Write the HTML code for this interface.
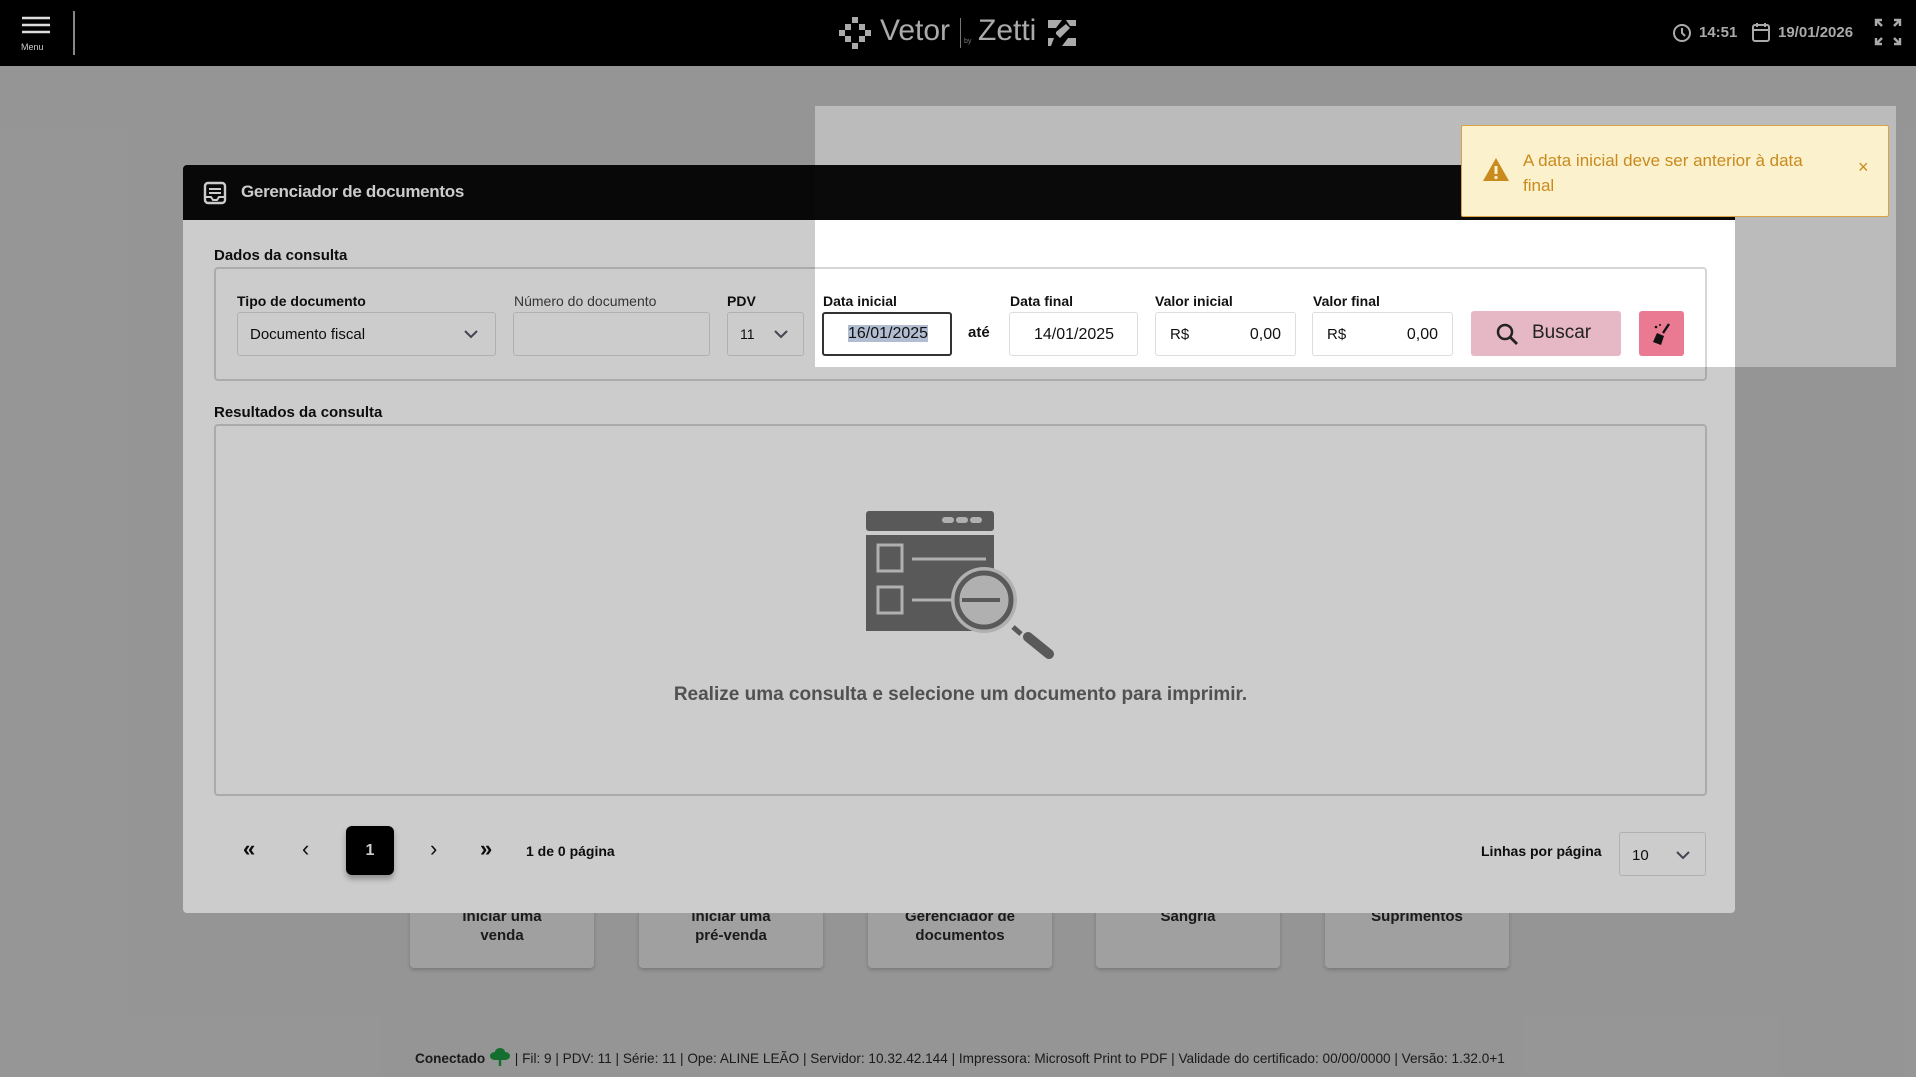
<!DOCTYPE html>
<html><head><meta charset="utf-8">
<style>
*{margin:0;padding:0;box-sizing:border-box}
body{width:1916px;height:1077px;overflow:hidden;background:#bbbbbb;font-family:"Liberation Sans",sans-serif;position:relative;color:#111}
.a{position:absolute}
.hdr{left:0;top:0;width:1916px;height:66px;background:#000}
.modal{left:183px;top:165px;width:1552px;height:748px;background:#fff;border-radius:4px}
.mh{left:183px;top:165px;width:1552px;height:55px;background:#0a0a0a;border-radius:4px 4px 0 0;color:#fff;font-weight:bold;font-size:17px}
.lbl{font-size:14px;font-weight:bold;color:#111}
.inp{height:44px;border:1px solid #ddd;border-radius:3px;background:#fff;font-size:16px}
.box{border:2px solid #d6d6d6;border-radius:4px}
.tile{top:898px;width:184px;height:70px;background:#c8c8c8;border-radius:4px;box-shadow:0 2px 4px rgba(0,0,0,.2);text-align:center;font-size:15px;font-weight:bold;color:#222;line-height:19px;padding-top:9px}
.dim{background:rgba(0,0,0,.2)}
</style></head><body>
<div class="a tile" style="left:410px">iniciar uma<br>venda</div>
<div class="a tile" style="left:639px">iniciar uma<br>pré-venda</div>
<div class="a tile" style="left:868px">Gerenciador de<br>documentos</div>
<div class="a tile" style="left:1096px">Sangria</div>
<div class="a tile" style="left:1325px">Suprimentos</div>
<div class="a" style="left:415px;top:1047px;font-size:13.6px;color:#222;white-space:nowrap"><b>Conectado</b> <svg width="22" height="20" viewBox="0 0 22 20" style="vertical-align:-4px"><path d="M11 1c-3 0-5 2-5 4-3 0-5 2-5 4s2 4 5 4h10c3 0 5-2 5-4s-2-4-5-4c0-2-2-4-5-4z" fill="#1a8a3a"/><path d="M11 10v9" stroke="#1a8a3a" stroke-width="2.5"/></svg> | Fil: 9 | PDV: 11 | Série: 11 | Ope: ALINE LEÃO | Servidor: 10.32.42.144 | Impressora: Microsoft Print to PDF | Validade do certificado: 00/00/0000 | Versão: 1.32.0+1</div>

<div class="a modal"></div>
<div class="a mh"><svg class="a" style="left:20px;top:16px" width="24" height="24" viewBox="0 0 24 24"><rect x="2" y="2" width="20" height="20" rx="3" fill="none" stroke="#fff" stroke-width="2.4"/><path d="M6 8h12M6 12h12M2 16h6l2 3h4l2-3h6" stroke="#fff" stroke-width="2" fill="none"/></svg><span class="a" style="left:58px;top:17px;letter-spacing:-0.3px">Gerenciador de documentos</span></div>
<div class="a lbl" style="left:214px;top:247px;font-size:15px">Dados da consulta</div>
<div class="a box" style="left:214px;top:267px;width:1493px;height:114px"></div>
<div class="a lbl" style="left:237px;top:293px">Tipo de documento</div>
<div class="a inp" style="left:237px;top:312px;width:259px;padding:13px 12px;font-size:15px">Documento fiscal<svg class="a" style="right:16px;top:16px" width="16" height="10"><path d="M2 2l6 6 6-6" stroke="#556" stroke-width="2" fill="none"/></svg></div>
<div class="a lbl" style="left:514px;top:293px;font-weight:normal;color:#444">Número do documento</div>
<div class="a inp" style="left:513px;top:312px;width:197px"></div>
<div class="a lbl" style="left:727px;top:293px">PDV</div>
<div class="a inp" style="left:727px;top:312px;width:77px;padding:13px 12px;font-size:14px">11<svg class="a" style="right:14px;top:16px" width="16" height="10"><path d="M2 2l6 6 6-6" stroke="#556" stroke-width="2" fill="none"/></svg></div>
<div class="a lbl" style="left:823px;top:293px">Data inicial</div>
<div class="a inp" style="left:822px;top:312px;width:130px;border:2px solid #333;padding:11px 0 0 24px"><span style="background:#b3bdd2">16/01/2025</span></div>
<div class="a lbl" style="left:968px;top:324px;font-size:15px">até</div>
<div class="a lbl" style="left:1010px;top:293px">Data final</div>
<div class="a inp" style="left:1009px;top:312px;width:129px;padding:13px 0 0 24px">14/01/2025</div>
<div class="a lbl" style="left:1155px;top:293px">Valor inicial</div>
<div class="a inp" style="left:1155px;top:312px;width:141px;padding:13px 14px;display:flex;justify-content:space-between"><span style="font-size:15px">R$</span><span>0,00</span></div>
<div class="a lbl" style="left:1313px;top:293px">Valor final</div>
<div class="a inp" style="left:1312px;top:312px;width:141px;padding:13px 14px;display:flex;justify-content:space-between"><span style="font-size:15px">R$</span><span>0,00</span></div>
<div class="a" style="left:1471px;top:311px;width:150px;height:45px;background:#e6b8c6;border-radius:3px;font-size:19px;color:#222"><svg class="a" style="left:24px;top:11px" width="24" height="24" viewBox="0 0 24 24"><circle cx="10" cy="10" r="7" stroke="#222" stroke-width="2.5" fill="none"/><path d="M15 15l7 7" stroke="#222" stroke-width="2.8"/></svg><span class="a" style="left:61px;top:11px">Buscar</span></div>
<div class="a" style="left:1639px;top:311px;width:45px;height:45px;background:#e97a92;border-radius:3px"><svg class="a" style="left:12px;top:11px" width="22" height="24" viewBox="0 0 22 24"><path d="M18 2l-6 9" stroke="#111" stroke-width="2.4"/><path d="M6 11l7 3-3 9-8-3z" fill="#111"/><circle cx="5" cy="5" r="1.3" fill="#111"/><circle cx="9" cy="3" r="1" fill="#111"/></svg></div>

<div class="a lbl" style="left:214px;top:404px;font-size:15px">Resultados da consulta</div>
<div class="a box" style="left:214px;top:424px;width:1493px;height:372px"></div>
<svg class="a" style="left:850px;top:500px" width="220" height="170" viewBox="0 0 220 170">
<rect x="16" y="11" width="128" height="20" rx="3" fill="#707070"/>
<rect x="92" y="17" width="12" height="6" rx="3" fill="#ddd"/><rect x="106" y="17" width="12" height="6" rx="3" fill="#ddd"/><rect x="120" y="17" width="12" height="6" rx="3" fill="#ddd"/>
<rect x="16" y="35" width="128" height="96" fill="#707070"/>
<rect x="28" y="45" width="24" height="26" fill="none" stroke="#ddd" stroke-width="3"/><path d="M62 59h74" stroke="#ddd" stroke-width="3"/>
<rect x="28" y="87" width="24" height="26" fill="none" stroke="#ddd" stroke-width="3"/><path d="M62 100h74" stroke="#ddd" stroke-width="3"/>
<circle cx="134" cy="100" r="33" fill="#dcdcdc"/>
<circle cx="134" cy="100" r="27" fill="none" stroke="#707070" stroke-width="5"/>
<path d="M112 100h38" stroke="#707070" stroke-width="4"/>
<path d="M163 127l8 7" stroke="#707070" stroke-width="5"/><path d="M178 137l21 17" stroke="#707070" stroke-width="10" stroke-linecap="round"/>
</svg>
<div class="a" style="left:214px;top:684px;width:1493px;text-align:center;font-size:19px;font-weight:bold;color:#666">Realize uma consulta e selecione um documento para imprimir.</div>

<div class="a" style="left:243px;top:836px;font-size:22px;font-weight:bold">«</div>
<div class="a" style="left:302px;top:836px;font-size:22px">‹</div>
<div class="a" style="left:346px;top:826px;width:48px;height:49px;background:#000;border-radius:6px;color:#fff;font-weight:bold;font-size:16px;text-align:center;line-height:49px;box-shadow:0 4px 6px rgba(0,0,0,.3)">1</div>
<div class="a" style="left:430px;top:836px;font-size:22px">›</div>
<div class="a" style="left:480px;top:836px;font-size:22px;font-weight:bold">»</div>
<div class="a lbl" style="left:526px;top:843px;font-size:14px">1 de 0 página</div>
<div class="a lbl" style="left:1481px;top:843px;font-size:14px">Linhas por página</div>
<div class="a inp" style="left:1619px;top:832px;width:87px;padding:14px 12px;font-size:15px">10<svg class="a" style="right:14px;top:17px" width="16" height="10"><path d="M2 2l6 6 6-6" stroke="#556" stroke-width="2" fill="none"/></svg></div>

<div class="a dim" style="left:0;top:66px;width:1916px;height:40px"></div>
<div class="a dim" style="left:0;top:106px;width:815px;height:971px"></div>
<div class="a dim" style="left:1896px;top:106px;width:20px;height:971px"></div>
<div class="a dim" style="left:815px;top:367px;width:1081px;height:710px"></div>

<div class="a hdr">
<svg class="a" style="left:22px;top:16px" width="28" height="18"><path d="M0 2h28M0 9h28M0 16h28" stroke="#ddd" stroke-width="2.5"/></svg>
<div class="a" style="left:21px;top:42px;font-size:9px;color:#ccc">Menu</div>
<div class="a" style="left:73px;top:11px;width:2px;height:44px;background:#888"></div>
<svg class="a" style="left:838px;top:16px" width="34" height="34" viewBox="0 0 34 34" fill="#aaa"><rect x="14" y="1" width="6" height="6"/><rect x="7" y="8" width="6" height="6"/><rect x="21" y="8" width="6" height="6"/><rect x="1" y="14" width="6" height="6"/><rect x="27" y="14" width="6" height="6"/><rect x="7" y="20" width="6" height="6"/><rect x="21" y="20" width="6" height="6"/><rect x="14" y="27" width="6" height="6"/></svg>
<div class="a" style="left:880px;top:14px;font-size:30px;color:#aaa">Vetor</div>
<div class="a" style="left:960px;top:18px;width:1px;height:30px;background:#777"></div>
<div class="a" style="left:964px;top:38px;font-size:7px;color:#777">by</div>
<div class="a" style="left:978px;top:14px;font-size:30px;color:#aaa">Zetti</div>
<svg class="a" style="left:1048px;top:20px" width="28" height="26" viewBox="0 0 28 26" fill="#aaa"><path d="M0 0h14l-6 8H0zM18 0h10v6h-6zM0 18h6l-3 8H0zM14 26h14v-8h-8z"/><path d="M8 12l10-8 4 4-10 10-4-4z"/></svg>
<svg class="a" style="left:1672px;top:23px" width="20" height="20" viewBox="0 0 20 20"><circle cx="10" cy="10" r="8" stroke="#aaa" stroke-width="2" fill="none"/><path d="M10 5v5l3 3" stroke="#aaa" stroke-width="2" fill="none"/></svg>
<div class="a" style="left:1699px;top:24px;font-size:15px;font-weight:bold;color:#aaa">14:51</div>
<svg class="a" style="left:1751px;top:22px" width="20" height="21" viewBox="0 0 20 21"><rect x="2" y="3" width="16" height="16" rx="2" stroke="#aaa" stroke-width="2" fill="none"/><path d="M2 8h16M6 1v4M14 1v4" stroke="#aaa" stroke-width="2"/></svg>
<div class="a" style="left:1778px;top:24px;font-size:15px;font-weight:bold;color:#aaa">19/01/2026</div>
<svg class="a" style="left:1874px;top:18px" width="28" height="28" viewBox="0 0 28 28" stroke="#aaa" stroke-width="2.4" fill="none"><path d="M2 8V2h6M2 2l6 6M26 8V2h-6M26 2l-6 6M2 20v6h6M2 26l6-6M26 20v6h-6M26 26l-6-6"/></svg>
</div>

<div class="a" style="left:1461px;top:125px;width:428px;height:92px;background:#fbf1cc;border:1px solid #d9a441;border-radius:2px">
<svg class="a" style="left:20px;top:31px" width="28" height="25" viewBox="0 0 28 25"><path d="M14 1L27 24H1z" fill="#c98a1e"/><path d="M14 9v8" stroke="#fbf1cc" stroke-width="3"/><circle cx="14" cy="20.5" r="1.6" fill="#fbf1cc"/></svg>
<div class="a" style="left:61px;top:22px;width:300px;font-size:17px;line-height:25px;color:#c98a1e">A data inicial deve ser anterior à data final</div>
<div class="a" style="left:396px;top:31px;font-size:18px;color:#c98a1e">×</div>
</div>
</body></html>
